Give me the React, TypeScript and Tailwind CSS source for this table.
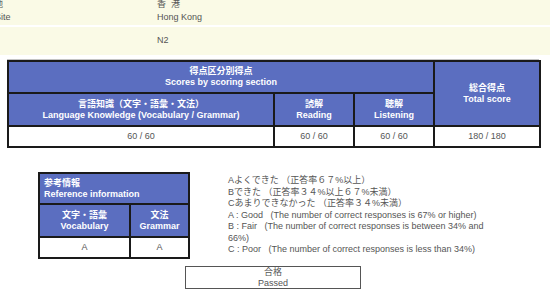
import React from 'react';

type Score = { label: string; value: string };

const scores: Score[] = [
  { label: 'language', value: '60 / 60' },
  { label: 'reading', value: '60 / 60' },
  { label: 'listening', value: '60 / 60' },
  { label: 'total', value: '180 / 180' },
];

const headCell = 'bg-[#5b6ec0] text-white font-bold text-center align-middle border-2 border-[#1a1a1a] leading-[11px]';
const bodyCell = 'bg-white text-[#555] text-center align-middle border-2 border-[#1a1a1a]';

const App: React.FC = () => {
  return (
    <div className="w-[550px] h-[295px] overflow-hidden bg-white text-[9px] text-[#555] font-['Liberation_Sans','Noto_Sans_CJK_JP',sans-serif]">
      {/* applicant info (page is scrolled, so the first row is cut) */}
      <div className="-mt-[3px] flex flex-col gap-[2px]">
        <div className="flex h-[28px] items-center bg-[#fafae6]">
          <div className="w-[157px] shrink-0 overflow-hidden">
            <div className="-ml-[24px] leading-[13px] whitespace-nowrap">
              試験地
              <br />
              Test Site
            </div>
          </div>
          <div className="leading-[13px] whitespace-pre">
            {'香  港'}
            <br />
            Hong Kong
          </div>
        </div>
        <div className="flex h-[28px] items-center bg-[#fafae6]">
          <div className="w-[157px] shrink-0" />
          <div>N2</div>
        </div>
      </div>

      {/* scores by section */}
      <div className="mt-[4px] ml-[7px] w-[532px] border-t border-[#c4c4c4]">
        <table className="w-full table-fixed border-collapse">
          <colgroup>
            <col className="w-[266px]" />
            <col className="w-[80px]" />
            <col className="w-[80px]" />
            <col className="w-[106px]" />
          </colgroup>
          <tbody>
            <tr className="h-[32px]">
              <td colSpan={3} className={headCell}>
                得点区分別得点
                <br />
                Scores by scoring section
              </td>
              <td rowSpan={2} className={headCell}>
                総合得点
                <br />
                Total score
              </td>
            </tr>
            <tr className="h-[33px]">
              <td className={headCell}>
                言語知識（文字・語彙・文法）
                <br />
                Language Knowledge (Vocabulary / Grammar)
              </td>
              <td className={headCell}>
                読解
                <br />
                Reading
              </td>
              <td className={headCell}>
                聴解
                <br />
                Listening
              </td>
            </tr>
            <tr className="h-[21px]">
              {scores.map(s => (
                <td key={s.label} className={bodyCell}>
                  {s.value}
                </td>
              ))}
            </tr>
          </tbody>
        </table>
      </div>

      {/* reference information */}
      <div className="mt-[24px] flex items-center">
        <table className="ml-[38px] w-[150px] table-fixed border-collapse">
          <colgroup>
            <col className="w-[91px]" />
            <col className="w-[59px]" />
          </colgroup>
          <tbody>
            <tr className="h-[31px]">
              <td colSpan={2} className={`${headCell} text-left pl-[4px]`}>
                参考情報
                <br />
                Reference information
              </td>
            </tr>
            <tr className="h-[33px]">
              <td className={headCell}>
                文字・語彙
                <br />
                Vocabulary
              </td>
              <td className={headCell}>
                文法
                <br />
                Grammar
              </td>
            </tr>
            <tr className="h-[21px]">
              <td className={bodyCell}>A</td>
              <td className={bodyCell}>A</td>
            </tr>
          </tbody>
        </table>

        <div className="ml-[38px] leading-[11.5px] whitespace-pre text-[#555]">
          <div>Aよくできた （正答率６７%以上）</div>
          <div>Bできた （正答率３４%以上６７%未満）</div>
          <div>Cあまりできなかった （正答率３４%未満）</div>
          <div>{'A : Good   (The number of correct responses is 67% or higher)'}</div>
          <div>{'B : Fair   (The number of correct responses is between 34% and'}</div>
          <div>66%)</div>
          <div>{'C : Poor   (The number of correct responses is less than 34%)'}</div>
        </div>
      </div>

      {/* result */}
      <div className="mt-[7px] ml-[185px] w-[176px] h-[23px] border border-[#555] flex flex-col items-center justify-center leading-[11px] text-[#555]">
        <div>合格</div>
        <div>Passed</div>
      </div>
    </div>
  );
};

export default App;
